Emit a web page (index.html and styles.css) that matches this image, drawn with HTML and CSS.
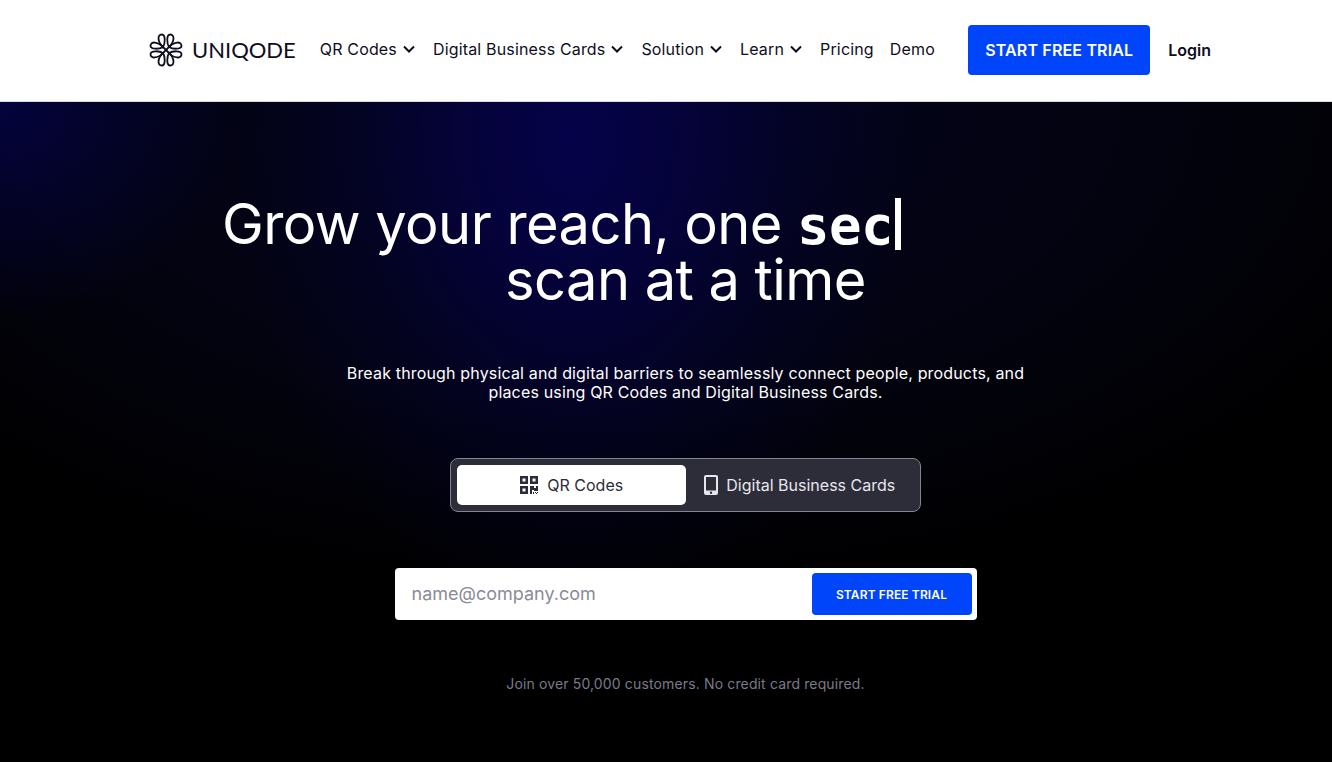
FILE: index.html
```html
<!DOCTYPE html>
<html lang="en">
<head>
    <meta charset="UTF-8">
    <meta name="viewport" content="width=device-width, initial-scale=1">
    <title>Uniqode</title>
    <link rel="stylesheet" href="styles.css">
</head>
<body>

    <header class="header">
        <a class="logo" href="#">
            <svg class="logo-mark" viewBox="-17 -17 34 34" aria-hidden="true">
                <defs>
                    <g id="petals">
                        <path d="M0 0L3 -3C1 -6 0 -15.500 4.200 -15.500C9 -15.500 8.500 -8 3 -3"/>
                        <path d="M3 -3C6 -1 15.500 0 15.500 -4.200C15.500 -9 8 -8.500 3 -3"/>
                    </g>
                </defs>
                <use href="#petals"/>
                <use href="#petals" transform="rotate(90)"/>
                <use href="#petals" transform="rotate(180)"/>
                <use href="#petals" transform="rotate(270)"/>
            </svg>
            <span class="logo-text">UNIQODE</span>
        </a>

        <nav class="nav">
            <button class="nav-item" type="button">QR Codes
                <svg class="chevron" viewBox="0 0 12 8"><path d="M1 1.5l5 5 5-5"/></svg>
            </button>
            <button class="nav-item" type="button">Digital Business Cards
                <svg class="chevron" viewBox="0 0 12 8"><path d="M1 1.5l5 5 5-5"/></svg>
            </button>
            <button class="nav-item" type="button">Solution
                <svg class="chevron" viewBox="0 0 12 8"><path d="M1 1.5l5 5 5-5"/></svg>
            </button>
            <button class="nav-item" type="button">Learn
                <svg class="chevron" viewBox="0 0 12 8"><path d="M1 1.5l5 5 5-5"/></svg>
            </button>
            <a class="nav-item" href="#">Pricing</a>
            <a class="nav-item" href="#">Demo</a>
        </nav>

        <div class="actions">
            <a class="btn" href="#">START FREE TRIAL</a>
            <a class="login" href="#">Login</a>
        </div>
    </header>

    <main class="hero">
        <h1 class="title">
            <span class="title-first">Grow your reach, one <span class="typed">sec</span><span class="caret"></span></span>
            <span class="title-second">scan at a time</span>
        </h1>

        <p class="intro">Break through physical and digital barriers to seamlessly connect people, products, and places using QR Codes and Digital Business Cards.</p>

        <div class="tabs">
            <button class="tab active" type="button">
                <svg class="icon-qr" viewBox="0 0 18 18">
                    <path fill-rule="evenodd" d="M0 0h8v8H0zM2.5 2.5v3h3v-3zM10 0h8v8h-8zM12.5 2.5v3h3v-3zM0 10h8v8H0zM2.5 12.5v3h3v-3z"/>
                    <path d="M10 10h4v2h2v-2h2v5h-4v-1h-2v4h-2zM13 16h1v2h-1zM15 16h1v1h-1zM16 17h1v1h-1zM17 16h1v1h-1z"/>
                </svg>
                QR Codes
            </button>
            <button class="tab" type="button">
                <svg class="icon-phone" viewBox="0 0 14 20">
                    <path fill-rule="evenodd" d="M2 0h10a2 2 0 0 1 2 2v16a2 2 0 0 1-2 2H2a2 2 0 0 1-2-2V2a2 2 0 0 1 2-2zM2 2v13.500h10V2zM7 16.500a1.200 1.200 0 1 0 0 2.400a1.200 1.200 0 0 0 0-2.400z"/>
                </svg>
                Digital Business Cards
            </button>
        </div>

        <form class="signup">
            <input class="email" type="email" placeholder="name@company.com" aria-label="Email">
            <button class="btn btn-small" type="submit">START FREE TRIAL</button>
        </form>

        <p class="note">Join over 50,000 customers. No credit card required.</p>
    </main>

</body>
</html>
```
FILE: styles.css
```css
* {
    box-sizing: border-box;
}

body {
    margin: 0;
    min-height: 100vh;
    display: flex;
    flex-direction: column;
    font-family: Inter, "Liberation Sans", sans-serif;
    font-size: 16px;
    color: #0e0e1e;
    background: #000;
}

a {
    color: inherit;
    text-decoration: none;
}

button {
    font: inherit;
    color: inherit;
    border: none;
    background: none;
    padding: 0;
    cursor: pointer;
}

.header {
    display: flex;
    align-items: center;
    height: 102px;
    padding: 0 121px 2px 149px;
    background: #fff;
    border-bottom: 1px solid #dcdce4;
}

.logo {
    display: flex;
    align-items: center;
    gap: 9px;
    margin-right: 24px;
}

.logo-mark {
    width: 34px;
    height: 34px;
    fill: none;
    stroke: #0e0e1e;
    stroke-width: 1.8;
}

.logo-text {
    font-family: Lato, sans-serif;
    font-size: 22px;
    line-height: 32px;
}

.nav {
    display: flex;
    gap: 16px;
    padding-bottom: 2px;
    letter-spacing: 0.01em;
}

.nav-item {
    display: flex;
    align-items: center;
    gap: 6px;
    letter-spacing: inherit;
    white-space: nowrap;
}

.chevron {
    width: 12px;
    height: 8px;
    margin-right: 2px;
    fill: none;
    stroke: #0e0e1e;
    stroke-width: 2;
}

.actions {
    display: flex;
    align-items: center;
    gap: 18px;
    margin-left: auto;
}

.btn {
    display: flex;
    align-items: center;
    justify-content: center;
    width: 182px;
    height: 50px;
    border-radius: 4px;
    background: #0045f9;
    color: #fff;
    font-weight: 600;
    letter-spacing: 0.01em;
    white-space: nowrap;
}

.login {
    font-weight: 600;
}

.hero {
    flex: 1;
    display: flex;
    flex-direction: column;
    align-items: center;
    padding: 94px 0 40px 39px;
    background:
        radial-gradient(ellipse 340px 470px at 575px 40px, #06024a, rgba(5, 2, 68, 0.75) 30%, rgba(3, 2, 60, 0.3) 65%, transparent),
        radial-gradient(ellipse 240px 220px at 0 0, rgba(4, 3, 70, 0.85), transparent),
        radial-gradient(ellipse 900px 500px at 600px 0, #040420, #030310 60%, #000);
    color: #fff;
}

.title {
    width: 927px;
    max-width: 100%;
    margin: 0 0 56px;
    font-size: 56px;
    font-weight: 400;
    line-height: 56px;
    letter-spacing: -0.01em;
}

.title-first,
.title-second {
    display: block;
    height: 56px;
}

.title-second {
    text-align: center;
}

.typed {
    font-family: "DejaVu Sans Mono", monospace;
    font-size: 54px;
    font-weight: 700;
}

.caret {
    display: inline-block;
    width: 6px;
    height: 52px;
    margin-left: 2px;
    vertical-align: -6px;
    background: #fff;
}

.intro {
    width: 700px;
    max-width: 100%;
    margin: 0 0 56px;
    line-height: 19px;
    letter-spacing: 0.01em;
    text-align: center;
}

.tabs {
    display: flex;
    width: 471px;
    max-width: 100%;
    height: 54px;
    padding: 6px;
    margin-bottom: 56px;
    border: 1px solid #84848f;
    border-radius: 8px;
    background: #2d2d3a;
    color: #e6e6ec;
}

.tab {
    flex: 1;
    display: flex;
    align-items: center;
    justify-content: center;
    gap: 8px;
    border-radius: 5px;
    white-space: nowrap;
}

.tab.active {
    background: #fff;
    color: #2d2d3a;
}

.tab svg {
    fill: currentColor;
}

.icon-qr {
    width: 20px;
    height: 18px;
}

.icon-phone {
    width: 14px;
    height: 20px;
}

.signup {
    display: flex;
    width: 582px;
    max-width: 100%;
    height: 52px;
    padding: 5px;
    margin-bottom: 56px;
    border-radius: 4px;
    background: #fff;
}

.email {
    flex: 1;
    min-width: 0;
    padding: 0 12px 2px;
    border: none;
    outline: none;
    background: none;
    font: inherit;
    font-size: 18px;
}

.email::placeholder {
    color: #8b8b97;
}

.btn-small {
    width: 160px;
    height: 42px;
    font-size: 12px;
}

.note {
    margin: 0;
    font-size: 14px;
    line-height: 16px;
    letter-spacing: 0.01em;
    color: #7a7a88;
}
```
